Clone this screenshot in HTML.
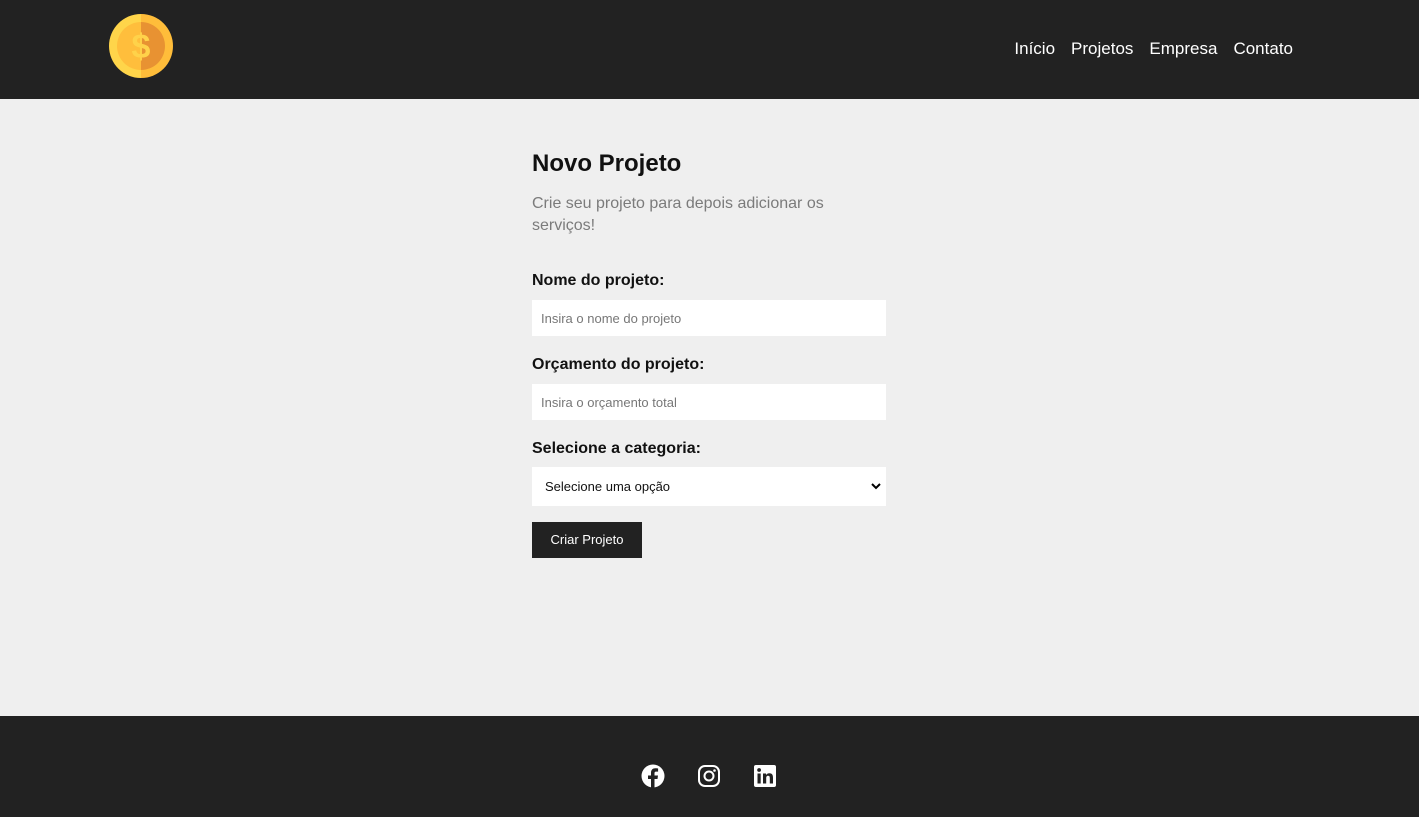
<!DOCTYPE html>
<html><head><meta charset="utf-8"><style>
*{margin:0;padding:0;box-sizing:border-box}
body{width:1419px;height:817px;background:#efefef;font-family:"Liberation Sans",sans-serif;position:relative;overflow:hidden}
header{position:absolute;top:0;left:0;width:1419px;height:99px;background:#222}
nav{position:absolute;right:126px;top:39px;display:flex;gap:16px;color:#fff;font-size:17px}
footer{position:absolute;top:716px;left:0;width:1419px;height:101px;background:#222}
.c{position:absolute;left:532px;top:150px;width:354px}
h1{font-size:24px;font-weight:bold;color:#111;margin-bottom:15px}
.sub{color:#7b7b7b;font-size:16px;line-height:22px;margin-bottom:35px;width:320px}
label{display:block;font-weight:bold;font-size:16px;line-height:18px;color:#111;margin-bottom:10px}
.in{background:#fff;height:36px;font-size:13px;color:#777;padding:11px 9px;margin-bottom:20px}
.l3{margin-bottom:9px}
.sel{background:#fff;height:39px;font-size:13px;color:#111;padding:12px 13px;margin-bottom:16px;position:relative}
.btn{background:#222;color:#fff;font-size:13px;width:110px;height:36px;text-align:center;line-height:36px}
</style></head><body>
<header>
<svg style="position:absolute;left:109px;top:14px" width="64" height="64" viewBox="0 0 64 64">
<path d="M32 0A32 32 0 0 0 32 64Z" fill="#FFD54A"/><path d="M32 0A32 32 0 0 1 32 64Z" fill="#FFBD3A"/>
<path d="M32 8A24 24 0 0 0 32 56Z" fill="#FFBE3C"/><path d="M32 8A24 24 0 0 1 32 56Z" fill="#E89232"/>
<text x="32" y="44" text-anchor="middle" font-size="34" font-weight="bold" fill="#FFD24A" font-family="Liberation Sans">$</text>
</svg>
<nav><span>Início</span><span>Projetos</span><span>Empresa</span><span>Contato</span></nav>
</header>
<div class="c">
<h1>Novo Projeto</h1>
<div class="sub">Crie seu projeto para depois adicionar os serviços!</div>
<label>Nome do projeto:</label>
<div class="in">Insira o nome do projeto</div>
<label>Orçamento do projeto:</label>
<div class="in">Insira o orçamento total</div>
<label class="l3">Selecione a categoria:</label>
<div class="sel">Selecione uma opção<svg style="position:absolute;right:5px;top:15px" width="10" height="8" viewBox="0 0 10 8"><path d="M1 2l4 4 4-4" stroke="#000" stroke-width="2" fill="none"/></svg></div>
<div class="btn">Criar Projeto</div>
</div>
<footer>
<svg style="position:absolute;left:641px;top:48px" width="24" height="24" viewBox="0 0 24 24"><circle cx="12" cy="12" r="11.5" fill="#fff"/><path d="M13.5 24V15h3l.5-3.5h-3.5V9.3c0-1 .3-1.7 1.8-1.7h1.8V4.5c-.3 0-1.4-.2-2.7-.2-2.7 0-4.4 1.6-4.4 4.6v2.6H7V15h3v9Z" fill="#222"/></svg>
<svg style="position:absolute;left:698px;top:49px" width="22" height="22" viewBox="0 0 22 22"><rect x="1" y="1" width="20" height="20" rx="6" fill="none" stroke="#fff" stroke-width="2"/><circle cx="11" cy="11" r="4.5" fill="none" stroke="#fff" stroke-width="2"/><circle cx="16.5" cy="5.5" r="1.3" fill="#fff"/></svg>
<svg style="position:absolute;left:754px;top:49px" width="22" height="22" viewBox="0 0 22 22"><rect width="22" height="22" rx="2" fill="#fff"/><rect x="3.5" y="8.5" width="3.2" height="10" fill="#222"/><circle cx="5.1" cy="5" r="1.9" fill="#222"/><path d="M9 8.5h3v1.5c.6-1 1.8-1.8 3.4-1.8 3 0 3.6 2 3.6 4.6v5.7h-3.2v-5c0-1.2 0-2.7-1.7-2.7s-1.9 1.3-1.9 2.6v5.1H9Z" fill="#222"/></svg>
</footer>
</body></html>
